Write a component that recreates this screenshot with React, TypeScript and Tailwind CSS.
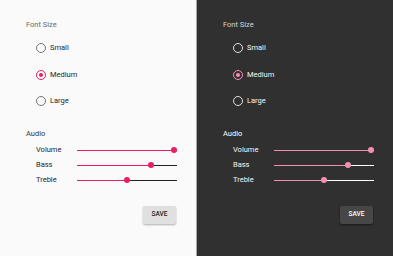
import React from "react";

type Theme = "light" | "dark";

const sliders = [
  { label: "Volume", value: 97 },
  { label: "Bass", value: 74 },
  { label: "Treble", value: 50 },
];

const sizes = ["Small", "Medium", "Large"];

const Radio: React.FC<{ checked: boolean; theme: Theme }> = ({ checked, theme }) => {
  const ring = checked
    ? theme === "light"
      ? "border-[#e91e63]"
      : "border-[#f48fb1]"
    : theme === "light"
    ? "border-[#757575]"
    : "border-[#e0e0e0]";
  const dot = theme === "light" ? "bg-[#e91e63]" : "bg-[#f48fb1]";
  return (
    <span className={`w-[10px] h-[10px] rounded-full border-[1.5px] ${ring} flex items-center justify-center`}>
      {checked && <span className={`w-[4px] h-[4px] rounded-full ${dot}`} />}
    </span>
  );
};

const Slider: React.FC<{ value: number; theme: Theme }> = ({ value, theme }) => {
  const fill = theme === "light" ? "bg-[#e91e63]" : "bg-[#f48fb1]";
  const rest = theme === "light" ? "bg-[#212121]" : "bg-white";
  return (
    <div className="relative w-[100px] h-[6px] flex items-center">
      <div className={`w-full h-px ${rest}`} />
      <div className={`absolute left-0 h-px ${fill}`} style={{ width: `${value}%` }} />
      <div
        className={`absolute w-[6px] h-[6px] rounded-full ${fill} -translate-x-1/2`}
        style={{ left: `${value}%` }}
      />
    </div>
  );
};

const Panel: React.FC<{ theme: Theme }> = ({ theme }) => {
  const light = theme === "light";
  return (
    <div
      className={`w-[196px] h-[256px] pl-[26px] pr-[19px] pt-[21px] flex flex-col ${
        light ? "bg-[#fafafa] text-[#262626]" : "bg-[#303030] text-[#f5f5f5]"
      }`}
    >
      <div className={`text-[7.5px] leading-[8px] ${light ? "text-[#6b6b6b]" : "text-[#d5d5d5]"}`}>Font Size</div>
      <div className="mt-[6px] pl-[10px] flex flex-col">
        {sizes.map((s) => (
          <div key={s} className="h-[26.5px] flex items-center gap-[4px]">
            <Radio checked={s === "Medium"} theme={theme} />
            <span className="text-[7.5px] leading-[8px]">{s}</span>
          </div>
        ))}
      </div>
      <div className={`mt-[15px] text-[7.5px] leading-[8px] ${light ? "text-[#333]" : "text-white"}`}>Audio</div>
      <div className="mt-[5px] pl-[10px] flex flex-col">
        {sliders.map((s) => (
          <div key={s.label} className="h-[15px] flex items-center">
            <span className="w-[41px] text-[7.5px] leading-[8px]">{s.label}</span>
            <Slider value={s.value} theme={theme} />
          </div>
        ))}
      </div>
      <div className="mt-[18px] flex justify-end">
        <button
          className={`w-[33px] h-[18px] mr-[1px] rounded-[2px] text-[6.5px] font-medium ${
            light
              ? "bg-[#e0e0e0] text-[#212121] shadow-[0_1px_2px_rgba(0,0,0,0.3)]"
              : "bg-[#474747] text-white shadow-[0_1px_2px_rgba(0,0,0,0.5)]"
          }`}
        >
          SAVE
        </button>
      </div>
    </div>
  );
};

export default function App() {
  return (
    <div className="w-[393px] h-[256px] flex font-['Roboto',sans-serif]">
      <Panel theme="light" />
      <div className="w-px h-full bg-[#a8a8a8]" />
      <Panel theme="dark" />
    </div>
  );
}
